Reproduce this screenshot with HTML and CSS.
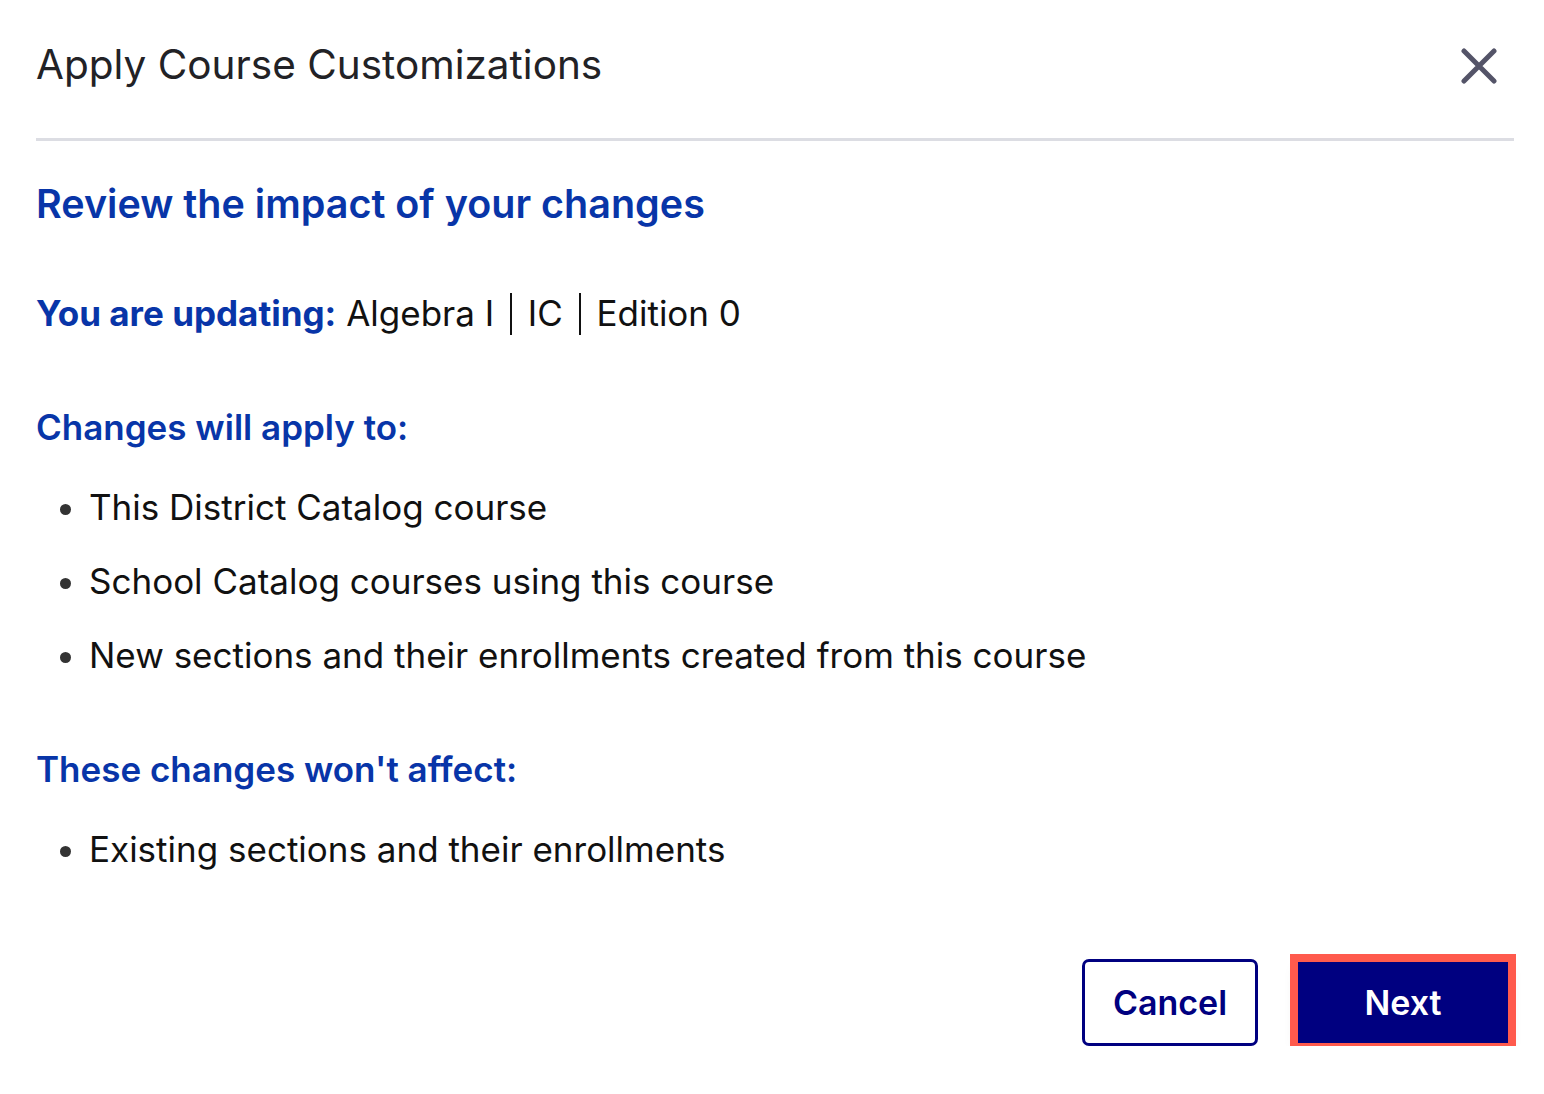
FILE: index.html
```html
<!DOCTYPE html>
<html lang="en">
<head>
    <meta charset="UTF-8">
    <meta name="viewport" content="width=device-width, initial-scale=1.0">
    <title>Apply Course Customizations</title>
    <link rel="stylesheet" href="styles.css">
</head>
<body>
    <div class="modal">
        <div class="modal-header">
            <h1>Apply Course Customizations</h1>
            <button class="close-btn" aria-label="Close">
                <svg width="36" height="36" viewBox="0 0 36 36">
                    <path d="M3 3 L33 33 M33 3 L3 33" stroke="#545468" stroke-width="5" stroke-linecap="round" fill="none"/>
                </svg>
            </button>
        </div>

        <div class="modal-body">
            <h2>Review the impact of your changes</h2>

            <p class="updating"><span class="label">You are updating:</span> Algebra I <span class="sep"></span> IC <span class="sep"></span> Edition 0</p>

            <h3>Changes will apply to:</h3>
            <ul>
                <li>This District Catalog course</li>
                <li>School Catalog courses using this course</li>
                <li>New sections and their enrollments created from this course</li>
            </ul>

            <h3>These changes won't affect:</h3>
            <ul>
                <li>Existing sections and their enrollments</li>
            </ul>
        </div>

        <div class="modal-footer">
            <button class="btn btn-secondary">Cancel</button>
            <button class="btn btn-primary">Next</button>
        </div>
    </div>
</body>
</html>
```

FILE: styles.css
```css
body {
    margin: 0;
    font-family: Inter, "Noto Sans", Arial, sans-serif;
    background: #fff;
    color: #111;
}
.modal {
    padding: 0 30px 0 36px;
}
.modal-header {
    display: flex;
    align-items: center;
    justify-content: space-between;
    height: 138px;
    border-bottom: 3px solid #dcdde3;
}
.modal-header h1 {
    margin: 0 0 8px 0;
    font-size: 40.5px;
    line-height: 48px;
    font-weight: 400;
    color: #222226;
}
.close-btn {
    background: none;
    border: none;
    padding: 0;
    margin: 0 17px 6px 0;
    cursor: pointer;
    display: flex;
}
.modal-body {
    padding-top: 40px;
}
h2 {
    margin: 0 0 66px 0;
    font-size: 39.5px;
    line-height: 46px;
    font-weight: 600;
    color: #0835a8;
}
h3 {
    margin: 0 0 39px 0;
    font-size: 35px;
    line-height: 41px;
    font-weight: 600;
    color: #0835a8;
}
.updating {
    margin: 0 0 72px 0;
    font-size: 35px;
    line-height: 41px;
}
.updating .label {
    font-weight: 700;
    color: #0835a8;
}
.sep {
    display: inline-block;
    width: 2px;
    height: 42px;
    background: #111;
    vertical-align: -9px;
    margin: 0 6px;
}
ul {
    margin: 0 0 73px 0;
    padding-left: 53px;
    font-size: 35px;
    line-height: 41px;
}
li {
    margin-bottom: 33px;
}
li::marker {
    color: #333;
}
.modal-footer {
    display: flex;
    justify-content: flex-end;
    align-items: center;
    gap: 40px;
    padding-top: 16px;
    padding-right: 6px;
}
.btn {
    font-family: Inter, "Noto Sans", Arial, sans-serif;
    font-size: 34px;
    font-weight: 600;
    cursor: pointer;
}
.btn-secondary {
    width: 176px;
    height: 87px;
    background: #fff;
    color: #000080;
    border: 3px solid #000080;
    border-radius: 7px;
}
.btn-primary {
    width: 210px;
    height: 81px;
    background: #000080;
    color: #fff;
    border: none;
    outline: 8px solid #ff5a4d;
    box-shadow: 0 6px 14px rgba(0, 0, 0, 0.12);
}
```
